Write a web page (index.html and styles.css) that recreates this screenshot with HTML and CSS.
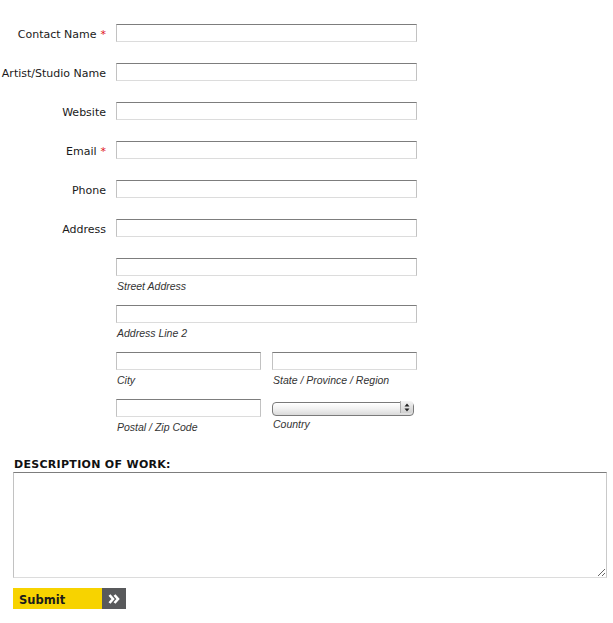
FILE: index.html
```html
<!DOCTYPE html>
<html>
<head>
<meta charset="utf-8">
<link rel="stylesheet" href="styles.css">
</head>
<body>
<form class="form">
  <div class="row">
    <label class="label">Contact Name <span class="req">*</span></label>
    <input class="field" type="text">
  </div>
  <div class="row">
    <label class="label">Artist/Studio Name</label>
    <input class="field" type="text">
  </div>
  <div class="row">
    <label class="label">Website</label>
    <input class="field" type="text">
  </div>
  <div class="row">
    <label class="label">Email <span class="req">*</span></label>
    <input class="field" type="text">
  </div>
  <div class="row">
    <label class="label">Phone</label>
    <input class="field" type="text">
  </div>
  <div class="row">
    <label class="label">Address</label>
    <input class="field" type="text">
  </div>
  <div class="address">
    <div class="sub">
      <input class="field" type="text">
      <span class="sublabel">Street Address</span>
    </div>
    <div class="sub">
      <input class="field" type="text">
      <span class="sublabel">Address Line 2</span>
    </div>
    <div class="pair">
      <div class="sub half">
        <input class="field" type="text">
        <span class="sublabel">City</span>
      </div>
      <div class="sub half">
        <input class="field" type="text">
        <span class="sublabel">State / Province / Region</span>
      </div>
    </div>
    <div class="pair last">
      <div class="sub half">
        <input class="field" type="text">
        <span class="sublabel">Postal / Zip Code</span>
      </div>
      <div class="sub half">
        <div class="select-wrap">
          <select class="select"><option></option></select>
          <span class="spin"><svg width="6" height="9" viewBox="0 0 6 9"><path d="M3 0.5L5.5 3.5H0.5Z M3 8.5L5.5 5.5H0.5Z" fill="#222"/></svg></span>
        </div>
        <span class="sublabel country">Country</span>
      </div>
    </div>
  </div>
  <div class="desc-label">DESCRIPTION OF WORK:</div>
  <textarea class="desc"></textarea>
  <button class="submit" type="button">
    <span class="submit-text">Submit</span>
    <span class="submit-icon"><svg width="12" height="10" viewBox="0 0 12 10"><path d="M1.5 1L5 5L1.5 9M6.5 1L10 5L6.5 9" fill="none" stroke="#fff" stroke-width="2.6"/></svg></span>
  </button>
</form>
</body>
</html>
```

FILE: styles.css
```css
html, body {
  margin: 0;
  padding: 0;
  background: #fff;
}

.form {
  padding: 24px 6px 0 13px;
  font-family: "DejaVu Sans", Arial, sans-serif;
  color: #111;
}

.row {
  display: flex;
  align-items: center;
  margin-bottom: 21px;
  margin-left: -13px;
}

.label {
  width: 106px;
  flex: none;
  display: flex;
  justify-content: flex-end;
  white-space: nowrap;
  font-size: 11px;
  line-height: 13px;
  margin-right: 10px;
  margin-top: 3px;
  color: #1a1a1a;
}

.req {
  color: #e0151b;
  margin-left: 4px;
}

.field {
  box-sizing: border-box;
  width: 301px;
  height: 18px;
  margin: 0;
  padding: 0 3px;
  border: 1px solid;
  border-color: #7d7d7d #c2c2c2 #dcdcdc #c2c2c2;
  background: #fff;
  font-size: 12px;
  outline: none;
}

.address {
  margin-left: 103px;
}

.sub {
  display: flex;
  flex-direction: column;
  margin-bottom: 12px;
}

.sublabel {
  font-family: "Liberation Sans", Arial, sans-serif;
  font-style: italic;
  font-size: 10.5px;
  line-height: 13px;
  margin-top: 4px;
  margin-left: 1px;
  color: #333;
}

.pair {
  display: flex;
  gap: 11px;
}

.pair.last .sub {
  margin-bottom: 0;
}

.half .field {
  width: 145px;
}

.select-wrap {
  position: relative;
  width: 142px;
  height: 14px;
  margin-top: 1px;
}

.select {
  -webkit-appearance: none;
  appearance: none;
  box-sizing: border-box;
  width: 142px;
  height: 14px;
  margin: 0;
  padding: 0;
  border: 1px solid #7a7a7a;
  border-radius: 4px;
  background: linear-gradient(#ffffff, #f2f2f2 45%, #dadada);
  box-shadow: inset 0 1px 0 #fff;
  outline: none;
}

.spin {
  position: absolute;
  right: 1px;
  top: 1px;
  width: 12px;
  height: 12px;
  border-left: 1px solid #aaa;
  border-radius: 0 3px 3px 0;
  background: linear-gradient(#f4f4f4, #cfcfcf);
  display: flex;
  align-items: center;
  justify-content: center;
}

.sublabel.country {
  margin-top: 4px;
}

.desc-label {
  margin-top: 24px;
  margin-left: 1px;
  font-size: 11px;
  line-height: 13px;
  font-weight: bold;
  letter-spacing: 0.3px;
  color: #111;
}

.desc {
  display: block;
  box-sizing: border-box;
  width: 594px;
  height: 106px;
  margin: 1px 0 0 0;
  padding: 2px;
  border: 1px solid;
  border-color: #7d7d7d #c9c9c9 #dcdcdc #c2c2c2;
  outline: none;
}

.submit {
  display: flex;
  margin: 10px 0 0 0;
  padding: 0;
  border: 0;
  height: 21px;
  background: none;
  cursor: pointer;
}

.submit-text {
  box-sizing: border-box;
  width: 89px;
  height: 21px;
  background: #f7d300;
  color: #1b1b1b;
  font-family: "DejaVu Sans", Arial, sans-serif;
  font-weight: bold;
  font-size: 11.5px;
  line-height: 24px;
  text-align: left;
  padding-left: 6px;
}

.submit-icon {
  width: 24px;
  height: 21px;
  background: #58595b;
  display: flex;
  align-items: center;
  justify-content: center;
}
```
